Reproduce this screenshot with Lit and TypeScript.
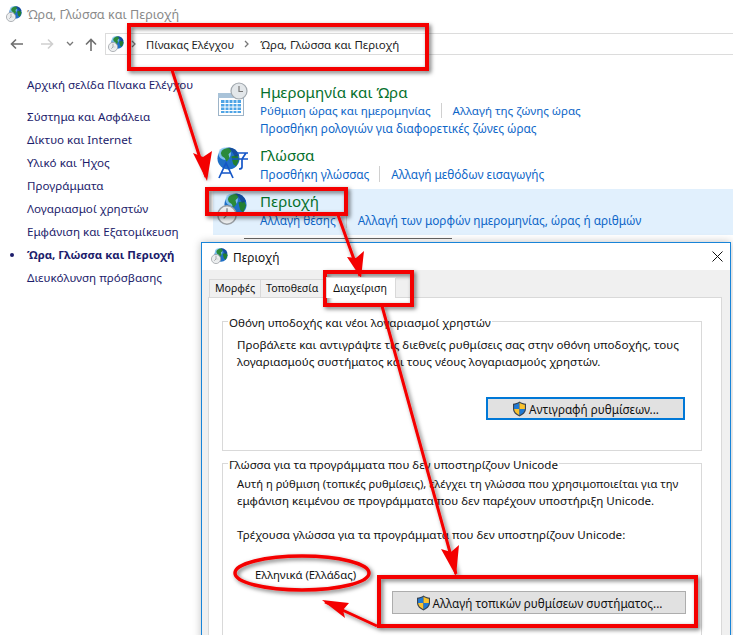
import { LitElement, html, css, svg } from "lit";
import { customElement } from "lit/decorators.js";

const globe = (x: number, y: number, s: number) => svg`
  <g transform="translate(${x} ${y}) scale(${s / 24})">
    <circle cx="12" cy="12" r="11.5" fill="#1f6fc6"/>
    <circle cx="8" cy="7" r="6.500" fill="#8fcdf5" opacity=".85"/>
    <path d="M5 4c3-3 7-3.500 9-2.500l1 3-3 3 1 4-3 4-2-4-3-2-1-3z" fill="#2b8a3a"/>
    <path d="M15 10l6-2 2 5-3 7-3-2-1-4z" fill="#237f30"/>
    <path d="M12 .5a11.500 11.500 0 0 1 11 8l-4 2-3-5z" fill="#0f3f8f" opacity=".7"/>
  </g>`;
const clock = (x: number, y: number, s: number) => svg`
  <g transform="translate(${x} ${y}) scale(${s / 24})">
    <circle cx="12" cy="12" r="11" fill="#eceeef" stroke="#9a9fa4" stroke-width="1.800"/>
    <path d="M12 4v8l-4 4" fill="none" stroke="#7b7f83" stroke-width="1.500"/>
    <path d="M12 12l6 0" stroke="#b6b9bc" stroke-width="1.200"/>
  </g>`;
const shield = html`<svg class="shield" viewBox="0 0 15 16" width="15" height="16">
  <path d="M7.5.5C5.5 2 3.5 2.6 1 2.7v5.1c0 3.6 2.8 6.2 6.5 7.7 3.7-1.5 6.5-4.1 6.5-7.7V2.7C11.500 2.600 9.500 2 7.500.5z" fill="#39424e"/>
  <path d="M7.500 1.800V8H2.100V3.700c2-.2 3.700-.8 5.400-1.900z" fill="#1f79d4"/>
  <path d="M7.500 1.800c1.700 1.100 3.400 1.700 5.400 1.900V8H7.500z" fill="#f9c22e"/>
  <path d="M2.100 8h5.400v6.200C4.600 12.900 2.300 11 2.100 8z" fill="#f9c22e"/>
  <path d="M7.500 8h5.400c-.2 3-2.500 4.900-5.400 6.200z" fill="#1f79d4"/>
</svg>`;

@customElement("app-root")
export class AppRoot extends LitElement {
  static styles = css`
    :host {
      display: block;
      position: relative;
      width: 733px;
      height: 635px;
      overflow: hidden;
      background: #fff;
      font-family: "Noto Sans", "Open Sans", sans-serif;
      font-size: 11.6px;
      color: #1a1a1a;
    }
    .title { display: flex; align-items: center; gap: 5px; height: 28px; padding-left: 6px; color: #8a8a8a; font-size: 12.6px; }
    .nav { display: flex; align-items: center; height: 22px; margin-top: 5px; padding-left: 10px; }
    .nav svg { flex: none; }
    .m16 { margin-left: 16px; }
    .m12 { margin-left: 12px; }
    .m11 { margin-left: 11px; }
    .addr { display: flex; align-items: center; flex: 1; height: 22px; margin-left: 8px; border: 1px solid #dcdcdc; border-right: 0; font-size: 11.2px; color: #1e1e1e; box-sizing: border-box; padding-left: 2px; }
    .addr .sep1 { margin-left: 7px; }
    .addr .sep2 { margin-left: 10px; }
    .crumb { margin-left: 10px; white-space: nowrap; }
    .crumb.last { font-size: 11.5px; margin-left: 11px; }
    .body { display: flex; margin-top: 12px; }
    .side { width: 213px; flex: none; padding: 6px 0 0 27px; box-sizing: border-box; color: #1c1c6b; display: flex; flex-direction: column; }
    .side div { height: 23px; line-height: 23px; white-space: nowrap; position: relative; }
    .side .home { margin-bottom: 9px; }
    .side .cur { font-weight: 700; font-size: 11.4px; }
    .side .cur::before { content: ""; position: absolute; left: -17px; top: 10px; width: 4px; height: 4px; border-radius: 50%; background: #1c1c6b; }
    .main { flex: 1; display: flex; flex-direction: column; min-width: 0; margin-top: 13px; font-size: 11.8px; }
    .sec { display: flex; padding-left: 2px; box-sizing: border-box; }
    .sec svg.ic { flex: none; width: 45px; height: 46px; }
    .sec h2 { margin: 0; font-weight: 400; font-size: 15.1px; line-height: 20px; color: #05702c; white-space: nowrap; }
    .links { display: flex; align-items: center; height: 17px; color: #0d66c8; white-space: nowrap; }
    .links.narrow { font-size: 11.55px; }
    .links span + span { margin-left: 10px; padding-left: 11px; border-left: 1px solid #d0d0d0; }
    .s1 { height: 65px; padding-top: 2px; }
    .s2 { height: 44px; }
    .s3 { height: 46px; background: #e1f0fd; }
    .s3 h2 { margin-top: 2px; }
    .behind { height: 1px; width: 208px; margin: 3px 0 0 31px; background: #666; }

    .dlg { position: absolute; left: 201px; top: 242px; width: 530px; height: 400px; box-sizing: border-box; background: #f0f0f0; border: 1px solid #1884d8; box-shadow: 0 0 8px rgba(0,0,0,.25); display: flex; flex-direction: column; }
    .dlg-t { height: 27px; flex: none; background: #fff; display: flex; align-items: center; padding-left: 9px; gap: 5px; font-size: 11.9px; color: #111; }
    .dlg-t .x { margin-left: auto; margin-right: 7px; }
    .tabs { display: flex; align-items: flex-end; height: 27px; padding-left: 8px; flex: none; font-size: 10.6px; color: #111; }
    .tab { height: 17px; line-height: 17px; padding: 0 5px; border: 1px solid #d9d9d9; border-bottom: 0; background: #f0f0f0; margin-left: -1px; white-space: nowrap; }
    .tab.on { height: 20px; line-height: 20px; background: #fff; margin-left: 2px; padding: 0 8px 0 6px; position: relative; z-index: 1; margin-bottom: -1px; }
    .panel { margin: 0 8px 0 6px; flex: 1; background: #fff; border: 1px solid #d9d9d9; padding: 23px 19px 0 13px; display: flex; flex-direction: column; gap: 12px; }
    .grp { position: relative; border: 1px solid #d9d9d9; padding: 0 14px; color: #111; box-sizing: border-box; }
    .leg { position: absolute; top: -7px; left: 5px; padding: 0 1px; background: #fff; line-height: 16px; white-space: nowrap; }
    .g1 { height: 130px; padding-top: 14px; }
    .g2 { height: 200px; padding-top: 11px; }
    .grp p { margin: 0; line-height: 17px; white-space: nowrap; }
    .grp p.tight { font-size: 11.2px; }
    .grp p.cur-note { margin-top: 17px; }
    .grp p.cur-lang { margin-top: 23px; padding-left: 18px; font-size: 11.3px; }
    .btnrow { display: flex; justify-content: flex-end; }
    .btn { display: flex; align-items: center; justify-content: center; gap: 2px; box-sizing: border-box; background: #e1e1e1; white-space: nowrap; color: #111; font-size: 11.7px; }
    .b1 { width: 199px; height: 23px; border: 2px solid #0078d7; margin: 27px 2px 0 0; }
    .b2 { width: 294px; height: 23px; border: 1px solid #adadad; margin: 8px 1px 0 0; }
    .ovl { position: absolute; inset: 0; pointer-events: none; }
  `;

  render() {
    return html`
      <div class="title">
        <svg width="16" height="16" viewBox="0 0 16 16">${globe(3, 0, 13)}${clock(0, 6, 10)}</svg>
        <span>Ώρα, Γλώσσα και Περιοχή</span>
      </div>
      <div class="nav">
        <svg width="14" height="12" viewBox="0 0 14 12"><path d="M13 6H2M6 1.500 1.500 6 6 10.500" fill="none" stroke="#6f6f6f" stroke-width="1.600"/></svg>
        <svg class="m16" width="14" height="12" viewBox="0 0 14 12"><path d="M1 6h11M8 1.500 12.500 6 8 10.500" fill="none" stroke="#cfcfcf" stroke-width="1.600"/></svg>
        <svg class="m12" width="8" height="6" viewBox="0 0 8 6"><path d="M1 1l3 3 3-3" fill="none" stroke="#777" stroke-width="1.300"/></svg>
        <svg class="m11" width="12" height="13" viewBox="0 0 12 13"><path d="M6 13V2M1 6.500 6 1.500l5 5" fill="none" stroke="#6f6f6f" stroke-width="1.600"/></svg>
        <div class="addr">
          <svg width="16" height="16" viewBox="0 0 16 16">${globe(3, 0, 13)}${clock(0, 6, 10)}</svg>
          <svg class="sep1" width="5" height="8" viewBox="0 0 5 8"><path d="M1 1l3 3-3 3" fill="none" stroke="#777" stroke-width="1.300"/></svg>
          <span class="crumb">Πίνακας Ελέγχου</span>
          <svg class="sep2" width="5" height="8" viewBox="0 0 5 8"><path d="M1 1l3 3-3 3" fill="none" stroke="#777" stroke-width="1.300"/></svg>
          <span class="crumb last">Ώρα, Γλώσσα και Περιοχή</span>
        </div>
      </div>
      <div class="body">
        <div class="side">
          <div class="home">Αρχική σελίδα Πίνακα Ελέγχου</div>
          <div>Σύστημα και Ασφάλεια</div>
          <div>Δίκτυο και Internet</div>
          <div>Υλικό και Ήχος</div>
          <div>Προγράμματα</div>
          <div>Λογαριασμοί χρηστών</div>
          <div>Εμφάνιση και Εξατομίκευση</div>
          <div class="cur">Ώρα, Γλώσσα και Περιοχή</div>
          <div>Διευκόλυνση πρόσβασης</div>
        </div>
        <div class="main">
          <div class="sec s1">
            <svg class="ic" viewBox="0 0 45 46">
              <rect x="3.500" y="11.500" width="25" height="22" fill="#fff" stroke="#9db4c8"/>
              <rect x="3" y="11" width="26" height="5" fill="#a9c3d9"/>
              <path d="M6 18h20v13H6z" fill="#4ea4e6"/>
              <path d="M6 21.500h20M6 25h20M6 28.500h20M10 18v13M14 18v13M18 18v13M22 18v13" stroke="#fff" stroke-width="1"/>
              <circle cx="24" cy="9" r="8" fill="#e3e7ea" stroke="#a1a8ae" stroke-width="1.200"/>
              <path d="M24 4v5.500h4" fill="none" stroke="#777" stroke-width="1.200"/>
            </svg>
            <div>
              <h2>Ημερομηνία και Ώρα</h2>
              <div class="links narrow"><span>Ρύθμιση ώρας και ημερομηνίας</span><span>Αλλαγή της ζώνης ώρας</span></div>
              <div class="links"><span>Προσθήκη ρολογιών για διαφορετικές ζώνες ώρας</span></div>
            </div>
          </div>
          <div class="sec s2">
            <svg class="ic" viewBox="0 0 45 46">
              ${globe(2, 2, 23)}
              <path d="M4 33 11 18l7 15M6.500 28H15.500" fill="none" stroke="#1456c8" stroke-width="1.700"/>
              <path d="M22 8h11M17 14h16M31 8l-4 6v8q0 2-3 2" fill="none" stroke="#1456c8" stroke-width="1.700"/>
            </svg>
            <div>
              <h2>Γλώσσα</h2>
              <div class="links"><span>Προσθήκη γλώσσας</span><span>Αλλαγή μεθόδων εισαγωγής</span></div>
            </div>
          </div>
          <div class="sec s3">
            <svg class="ic" viewBox="0 0 45 46">${globe(9, 4, 23)}${clock(2, 16, 20)}</svg>
            <div>
              <h2>Περιοχή</h2>
              <div class="links"><span>Αλλαγή θέσης</span><span>Αλλαγή των μορφών ημερομηνίας, ώρας ή αριθμών</span></div>
            </div>
          </div>
          <div class="behind"></div>
        </div>
      </div>

      <div class="dlg">
        <div class="dlg-t">
          <svg width="17" height="17" viewBox="0 0 17 17">${globe(3, 0, 14)}${clock(0, 6, 10)}</svg>
          <span>Περιοχή</span>
          <svg class="x" width="11" height="11" viewBox="0 0 11 11"><path d="M.5.5l10 10M10.500.5l-10 10" stroke="#111" stroke-width="1"/></svg>
        </div>
        <div class="tabs">
          <div class="tab">Μορφές</div>
          <div class="tab">Τοποθεσία</div>
          <div class="tab on">Διαχείριση</div>
        </div>
        <div class="panel">
          <div class="grp g1">
            <div class="leg">Οθόνη υποδοχής και νέοι λογαριασμοί χρηστών</div>
            <p>Προβάλετε και αντιγράψτε τις διεθνείς ρυθμίσεις σας στην οθόνη υποδοχής, τους</p>
            <p>λογαριασμούς συστήματος και τους νέους λογαριασμούς χρηστών.</p>
            <div class="btnrow"><div class="btn b1">${shield}<span>Αντιγραφή ρυθμίσεων...</span></div></div>
          </div>
          <div class="grp g2">
            <div class="leg">Γλώσσα για τα προγράμματα που δεν υποστηρίζουν Unicode</div>
            <p class="tight">Αυτή η ρύθμιση (τοπικές ρυθμίσεις), ελέγχει τη γλώσσα που χρησιμοποιείται για την</p>
            <p>εμφάνιση κειμένου σε προγράμματα που δεν παρέχουν υποστήριξη Unicode.</p>
            <p class="cur-note">Τρέχουσα γλώσσα για τα προγράμματα που δεν υποστηρίζουν Unicode:</p>
            <p class="cur-lang">Ελληνικά (Ελλάδας)</p>
            <div class="btnrow"><div class="btn b2">${shield}<span>Αλλαγή τοπικών ρυθμίσεων συστήματος...</span></div></div>
          </div>
        </div>
      </div>

      <svg class="ovl" width="733" height="635" viewBox="0 0 733 635">
        <defs>
          <filter id="sh" x="-20%" y="-20%" width="140%" height="140%">
            <feDropShadow dx="2" dy="2" stdDeviation="2" flood-color="#000" flood-opacity=".55"/>
          </filter>
        </defs>
        <g filter="url(#sh)" fill="none" stroke="#f40000" stroke-width="4">
          <rect x="129" y="25" width="298" height="44"/>
          <rect x="207" y="189" width="139" height="25"/>
          <rect x="325" y="272" width="87" height="33"/>
          <rect x="379" y="577" width="317" height="49"/>
          <ellipse cx="302" cy="573" rx="67" ry="17" stroke-width="3.500"/>
          <path stroke-width="3" d="M172 70 206 177M338 215 360 276M382 306 456 574M377 626 325 602"/>
        </g>
        <g fill="#f40000">
          <path d="M207 181 193 153 203 157 212 151z"/>
          <path d="M361 278 347 257 356 258 364 251z"/>
          <path d="M456 576 441 549 451 552 459 545z"/>
          <path d="M322 600 349 603 343 610 345 618z"/>
        </g>
      </svg>
    `;
  }
}
